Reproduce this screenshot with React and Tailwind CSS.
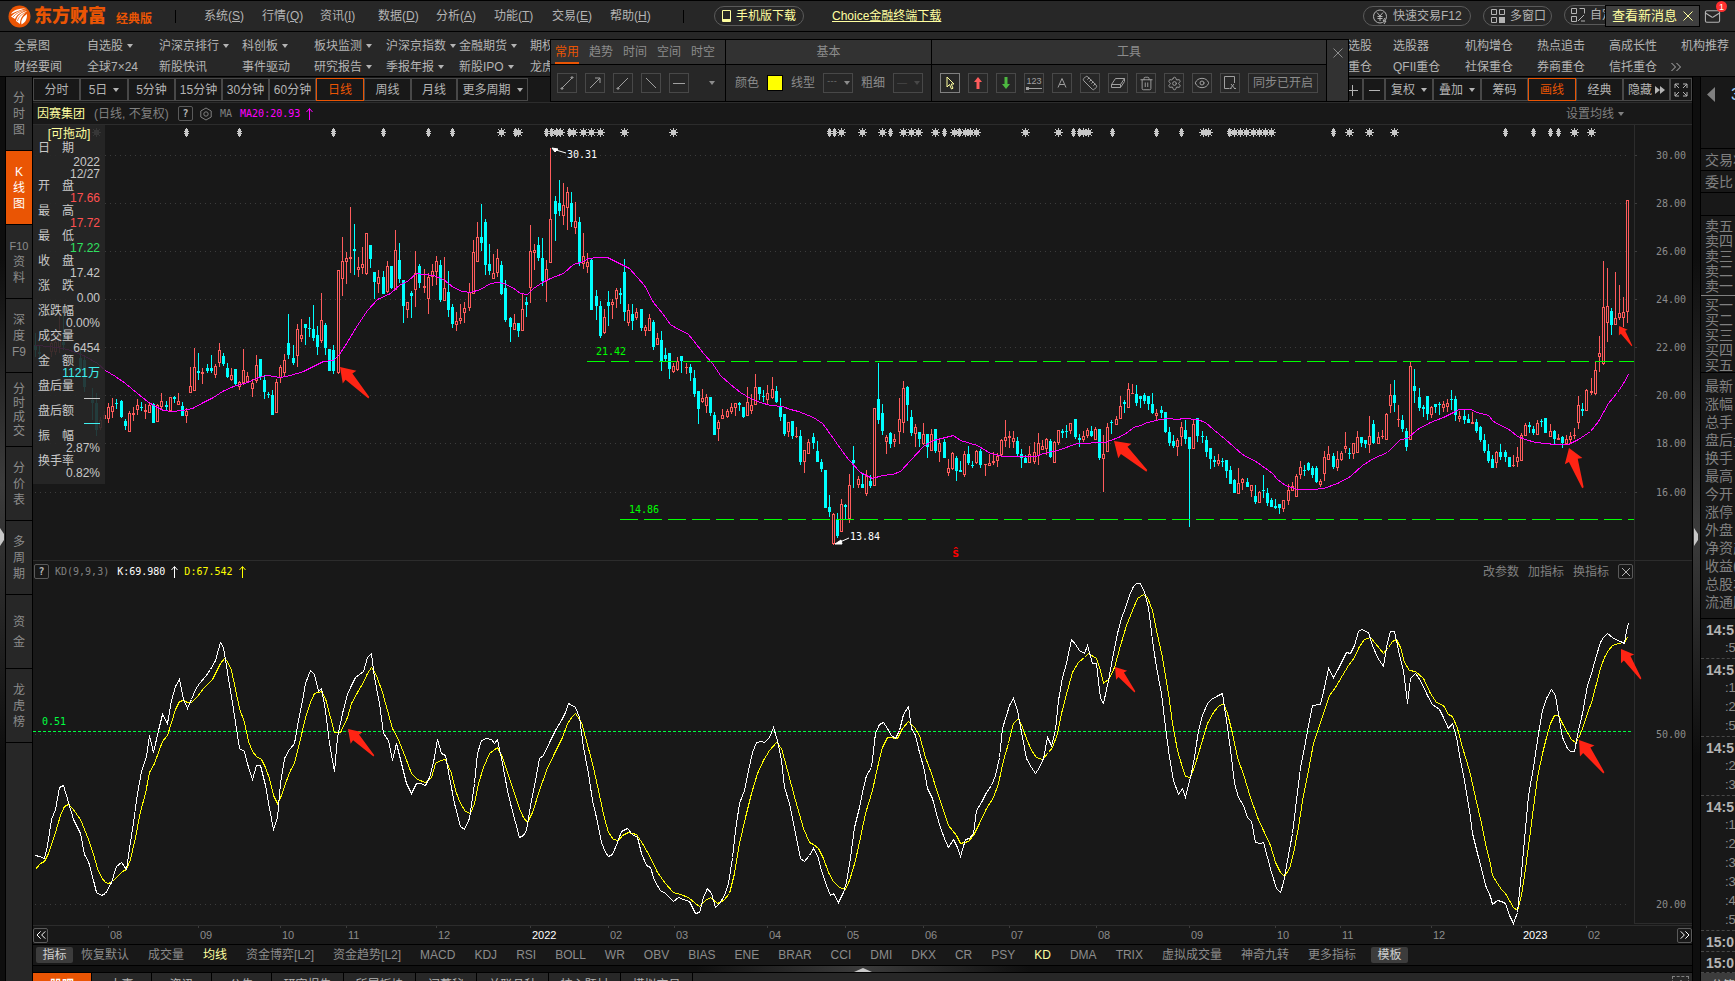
import React from "react";
import { Eye, Settings, Trash2, Mail, ChevronsLeft, ChevronsRight, Ruler } from "lucide-react";

/* ---------- chart data ---------- */
/* Each block: origin of the block and rows of [x, high, bodyTop, bodyBottom, low, rising], three units to a pixel. */
const CANDLES = [
  { ox: 0, oy: 80, rows: [[106,758,795,810,830,0],[118,797,817,822,843,0],[154,770,790,815,830,1],[166,760,785,815,825,1],[178,700,760,800,820,1],[190,705,785,795,810,0],[240,800,835,870,880,0],[253,830,840,920,935,0],[277,925,960,970,1020,0],[290,940,970,1050,1067,0],[302,1010,1020,1045,1050,1],[314,992,1006,1018,1018,1],[326,968,982,1018,1030,1],[337,955,978,997,1015,1],[350,957,968,972,988,0],[364,960,962,1012,1014,0],[376,1018,1022,1038,1050,0],[388,993,1000,1055,1055,1],[400,982,998,1006,1022,1],[412,957,976,990,1005,1],[424,965,980,984,992,0],[436,972,990,996,1018,1],[448,965,975,998,1000,1],[460,970,972,1030,1030,0],[472,973,975,1025,1025,1],[485,938,962,982,990,1],[499,962,975,982,992,0],[511,952,952,992,995,1],[523,947,950,958,970,0],[535,938,963,974,974,1],[548,965,977,1007,1008,0],[559,983,992,1007,1028,1],[571,860,918,938,938,1],[583,803,862,932,932,1],[595,820,873,880,900,0],[607,865,876,883,912,1],[622,852,865,872,880,0],[634,825,865,873,880,0],[646,852,858,885,893,1],[658,788,810,848,860,1],[670,820,827,852,858,0],[683,850,865,890,893,0],[695,865,884,900,902,1],[706,867,867,912,914,0],[718,902,906,920,930,1],[730,806,870,908,914,1],[742,877,888,905,910,1],[757,898,910,926,950,1],[769,825,856,902,908,1],[781,837,837,890,900,0],[794,885,900,936,957,0],[806,935,942,946,955,0],[817,930,945,1004,1005,0],[829,898,905,998,998,1],[841,855,862,895,910,1],[853,822,840,880,888,1],[865,702,790,825,838,0]] },
  { ox: 290, oy: 120, rows: [[10,675,713,730,735,0],[22,612,628,708,740,1],[34,597,645,656,665,1],[46,612,612,624,675,0],[58,590,623,627,650,0],[70,555,627,654,662,0],[82,618,645,682,704,0],[94,519,600,663,668,1],[106,610,615,684,705,0],[118,687,687,753,753,0],[130,675,690,753,762,0],[145,451,451,758,762,1],[157,351,423,476,528,1],[169,395,414,425,492,1],[181,261,411,417,459,1],[193,312,387,392,465,0],[205,411,441,449,471,1],[217,381,432,443,461,1],[229,339,340,461,465,1],[241,375,375,417,444,0],[253,456,456,486,536,0],[265,450,471,491,519,1],[280,453,471,521,522,0],[292,423,438,517,520,1],[304,437,438,504,508,0],[316,330,390,509,510,1],[328,369,420,477,490,0],[340,480,480,558,609,0],[352,546,546,570,594,1],[364,513,519,528,594,0],[376,393,458,509,560,1],[388,432,438,489,504,0],[403,447,498,504,518,1],[415,459,472,536,582,1],[427,432,453,472,498,1],[439,407,423,455,495,1],[451,420,434,540,546,0],[463,411,504,542,543,1],[475,453,516,570,591,0],[487,551,561,612,624,0],[499,576,602,614,632,1],[511,552,593,603,612,1],[523,546,564,580,609,1],[538,489,515,563,573,1],[550,360,396,521,522,1],[562,306,351,425,426,1],[574,252,351,369,393,0],[586,297,306,435,465,0],[598,372,432,453,465,0],[610,402,458,476,477,1],[622,387,414,458,471,1],[634,423,435,522,525,0],[646,480,504,600,606,0],[661,591,594,621,666,0],[673,582,609,629,630,1],[685,609,609,633,651,0],[697,519,568,632,633,1],[709,531,546,555,591,0],[721,315,393,503,549,1],[733,372,390,398,449,1],[745,351,375,414,423,0],[757,354,414,483,498,0],[769,420,447,482,546,1],[781,84,297,428,429,1],[796,228,243,282,363,0],[808,180,249,273,288,0],[820,189,255,287,315,1],[832,201,216,263,330,1],[844,216,249,306,321,0],[856,246,303,323,342,1],[868,291,306,429,438,0],[880,339,408,432,447,1],[892,399,426,440,459,1],[904,417,420,570,570,0],[919,510,528,558,600,0],[931,543,558,648,654,0],[943,567,591,638,642,1],[955,513,546,558,618,0],[967,537,546,554,597,1],[979,504,510,536,564,1],[991,504,518,524,552,0],[1003,417,456,576,603,0],[1015,552,570,608,618,1],[1027,552,582,603,630,0],[1039,564,577,593,600,1],[1054,567,567,624,633,0],[1066,615,621,632,648,1],[1078,582,594,632,633,1],[1090,600,606,681,690,0],[1102,639,653,674,675,1],[1114,633,660,723,753,0],[1126,684,705,717,724,0],[1138,699,699,747,777,0],[1150,729,738,755,759,1],[1162,711,724,750,753,1],[1174,708,708,724,759,0],[1189,728,741,744,762,1]] },
  { ox: 690, oy: 350, rows: [[1,42,51,69,93,0],[13,60,84,132,141,0],[25,123,123,177,222,0],[37,117,144,155,159,1],[49,132,141,167,189,1],[61,141,141,189,198,0],[73,186,195,255,255,0],[85,210,216,236,273,1],[97,177,196,206,207,1],[112,177,184,200,204,1],[124,159,172,185,192,1],[136,159,160,173,198,1],[148,156,159,164,183,0],[160,171,171,201,204,0],[172,111,157,197,198,1],[184,132,166,182,192,1],[196,72,111,164,165,1],[208,111,111,132,150,0],[220,120,137,141,156,0],[232,105,129,149,162,1],[247,81,117,143,146,1],[259,108,123,156,159,0],[271,144,171,201,213,0],[283,192,192,252,258,0],[295,216,217,246,261,1],[307,213,213,258,267,0],[319,231,258,262,264,1],[331,240,258,336,345,0],[343,300,300,335,369,1],[355,267,276,311,312,1],[370,249,261,279,297,0],[382,273,303,336,336,0],[394,327,336,357,366,0],[406,360,360,474,474,0],[418,435,471,486,501,0],[430,489,492,583,585,1],[442,489,507,558,564,0],[454,447,462,545,546,1],[466,462,465,471,507,0],[478,372,405,508,519,1],[490,288,330,339,414,0],[505,378,387,404,413,1],[517,372,402,414,414,0],[529,360,378,431,437,1],[541,375,393,408,414,0],[553,174,175,407,408,1],[565,39,147,210,222,0],[577,162,189,243,255,0],[589,255,262,275,312,1],[601,246,249,282,294,0],[613,252,267,276,291,1],[628,144,208,245,282,1],[640,93,115,218,249,1],[652,108,111,165,213,0],[664,180,201,249,258,0],[676,222,231,251,291,1],[688,246,246,267,291,0],[700,219,253,283,285,1],[712,252,252,291,324,0],[724,237,253,302,303,1],[736,237,237,303,309,0],[748,270,279,305,335,1],[763,267,276,324,324,0],[775,327,355,368,378,1],[787,306,310,356,360,1],[799,318,324,363,393,0],[811,333,361,366,366,0],[823,303,313,374,381,1],[835,288,312,339,345,0],[847,333,344,348,354,0],[859,300,303,340,341,1],[871,297,303,345,354,0],[886,342,342,345,378,1],[898,312,339,347,348,1],[910,306,333,338,345,1],[922,309,318,332,351,1],[934,267,270,314,321,1],[946,210,261,272,290,1],[958,243,258,263,294,1],[970,243,264,276,294,1],[982,261,273,312,318,0],[994,297,312,324,354,0],[1006,315,324,339,339,0],[1018,288,312,338,339,1],[1033,276,306,336,342,1],[1045,249,279,318,345,1],[1057,270,288,299,300,1],[1069,264,267,297,315,1],[1081,267,273,321,324,0],[1093,273,276,338,339,1],[1105,240,241,280,285,1],[1117,237,243,248,264,0],[1129,225,242,246,264,0],[1141,219,220,242,252,1],[1156,207,207,261,267,0],[1168,252,264,269,291,0],[1180,243,258,269,276,1],[1192,234,240,258,264,1],[1204,228,243,258,261,0],[1216,231,237,269,270,1],[1228,237,237,324,330,0],[1240,255,312,328,426,1],[1252,219,231,305,306,1],[1264,210,215,220,252,0]] },
  { ox: 1110, oy: 350, rows: [[19,198,207,224,225,1],[31,138,168,206,207,1],[43,150,157,162,189,0],[55,99,117,173,174,1],[67,102,129,132,132,1],[79,105,132,159,168,0],[91,138,138,147,174,0],[103,129,135,153,162,0],[115,138,138,162,180,0],[127,129,162,189,192,0],[139,177,189,199,213,1],[154,168,180,189,204,0],[166,186,186,246,249,0],[178,231,246,279,288,0],[190,255,273,288,294,0],[202,264,270,290,318,1],[214,216,231,262,288,1],[226,210,240,267,282,0],[238,261,261,297,531,0],[250,210,222,296,297,1],[262,204,204,258,276,0],[277,243,258,262,279,0],[289,258,270,306,321,0],[301,294,294,327,357,0],[313,318,330,336,351,0],[325,312,330,342,348,1],[337,324,332,336,351,0],[349,330,330,363,384,0],[361,348,360,402,402,0],[373,387,390,429,429,0],[385,354,399,431,432,1],[397,384,387,398,420,1],[412,384,396,411,411,0],[424,405,405,422,441,1],[436,405,438,456,462,0],[448,423,426,458,459,1],[460,375,419,423,444,0],[472,414,429,459,468,0],[484,444,450,471,471,0],[496,447,468,474,477,0],[508,462,462,474,492,0],[520,450,450,476,486,1],[535,402,420,452,465,1],[547,396,408,422,423,1],[559,372,378,440,441,1],[571,333,351,374,387,1],[583,345,359,363,378,0],[595,336,339,360,363,0],[607,348,354,375,384,0],[619,348,354,396,399,0],[631,387,393,404,411,1],[643,303,321,371,393,1],[655,288,312,329,330,1],[670,309,318,351,357,0],[682,303,327,353,363,1],[694,303,309,329,333,1],[706,246,288,296,309,1],[718,294,309,313,327,0],[730,279,279,311,327,1],[742,243,261,308,309,1],[754,261,261,279,291,0],[766,270,270,282,294,0],[778,198,258,284,309,1],[790,210,222,279,282,0],[805,246,261,281,282,1],[817,240,258,261,267,1],[829,189,192,269,270,1],[841,102,135,167,189,1],[853,90,135,159,186,0],[865,165,207,210,231,1],[877,195,210,237,246,0],[889,234,243,291,303,0],[901,36,48,269,270,1],[913,57,108,123,159,0],[928,114,141,174,183,0],[940,165,171,177,201,0],[952,138,138,192,210,0],[964,168,171,194,204,1],[976,162,162,171,189,0],[988,156,162,166,195,0],[1000,153,162,173,186,1],[1012,147,159,170,186,1],[1024,120,147,150,180,0],[1036,138,147,195,213,0],[1048,183,198,206,216,1],[1063,180,198,210,222,0],[1075,192,207,219,219,0],[1087,186,216,221,222,1],[1099,207,216,243,249,0],[1111,228,231,270,276,0],[1123,252,270,303,309,0],[1135,282,303,333,339,0],[1147,315,327,354,354,0],[1159,303,306,338,354,1],[1171,282,306,321,330,0],[1186,300,306,321,336,0],[1198,321,321,351,351,0]] },
  { ox: 1435, oy: 80, rows: [[235,1125,1155,1158,1160,1],[247,1100,1131,1145,1160,1],[259,1060,1066,1142,1143,1],[271,1028,1035,1067,1068,1],[283,1025,1035,1040,1060,0],[295,1038,1047,1060,1066,0],[307,1020,1030,1064,1065,1],[319,1017,1022,1026,1040,0],[331,1014,1014,1058,1058,0],[346,1032,1053,1070,1071,1],[358,1050,1053,1077,1095,0],[370,1062,1074,1079,1080,1],[382,1068,1070,1090,1104,0],[394,1065,1078,1093,1096,1],[406,1056,1068,1080,1088,1],[418,1045,1064,1067,1076,1],[430,948,976,1028,1047,1],[442,968,988,992,1008,0],[454,927,930,992,993,1],[469,893,934,938,944,1],[481,846,871,943,945,1],[493,768,820,832,876,1],[505,543,682,853,855,1],[517,564,678,730,786,1],[529,684,693,735,765,0],[541,576,714,734,735,1],[553,615,699,713,720,1],[565,651,697,713,740,1],[577,360,361,697,728,1]] },
];

/* Line series: origin, units per pixel on each axis, then flat x,y pairs. */
const MA20 = [
  [0, 80, 3, 3, [105,795,150,797,200,808,250,825,290,850,316,870,345,888,375,910,410,938,440,962,465,978,490,990,515,994,545,990,575,984,610,966,640,950,665,933,700,918,740,905,775,892,800,886,840,890]],
  [290, 120, 3, 3, [0,766,40,752,100,722,130,719,148,702,175,660,200,615,230,570,260,538,300,518,330,492,350,484,378,458,400,462,430,466,460,476,490,500,515,512,540,516,570,508,600,490,620,487,640,488,665,502,690,518,710,523,730,505,755,487,780,473,820,458,850,433,880,424,895,415,925,412,950,412,975,424,1000,434,1018,444,1040,470,1062,496,1090,545,1115,580,1140,612,1165,628,1190,640,1210,660,1240,700,1265,730,1290,765]],
  [690, 350, 3, 3, [120,102,150,126,180,143,210,155,240,165,275,168,300,178,325,183,370,202,395,220,430,263,440,282,475,328,510,365,545,383,575,374,605,373,630,363,660,330,700,287,730,270,765,262,788,254,810,270,860,284,900,310,940,319,1035,319,1060,309,1100,301,1160,280,1245,276,1285,262,1310,245,1330,230]],
  [1110, 350, 3, 3, [90,224,110,215,150,207,170,204,200,207,220,203,260,206,285,215,310,238,345,266,395,312,440,336,485,370,500,388,525,405,560,417,605,418,640,413,680,400,720,378,755,345,790,325,830,306,870,268,890,264,920,238,960,216,1000,202,1035,183,1045,178,1080,178,1100,186,1135,195,1150,212,1200,241]],
  [1435, 80, 3, 3, [245,1068,270,1076,300,1086,360,1093,400,1093,430,1078,465,1052,490,1022,520,970,545,935,565,910,578,882]],
];

const K_LINE = [
  [0, 400, 3, 2.699, [105,1228,118,1230,131,1236,142,1200,154,1130,166,1105,178,1044,190,1038,204,1085,218,1130,240,1170,252,1225,265,1245,278,1295,289,1328,302,1337,315,1330,332,1300,348,1258,362,1248,377,1265,388,1210,398,1140,410,1060,424,1000,437,960,448,905,460,950,473,890,485,848,500,872,512,810,524,773,536,752,548,808,560,832,573,808,585,780,598,763,615,745,630,727,645,703,659,652,670,668,682,735,694,800,706,870,718,940,731,948,745,990,757,1023,769,985,781,984,794,1040,806,1100,818,1157,830,1125,840,1035,853,965,866,942]],
  [290, 570, 1.3067, 3, [0,535,5,520,10,450,16,390,20,340,26,300,31,312,36,362,41,355,46,420,51,520,57,602,62,500,68,430,74,372,80,345,85,320,95,302,100,260,106,250,110,320,116,400,122,490,128,510,133,570,138,520,145,580,152,640,158,670,164,640,170,638,176,646,182,620,187,575,192,508,197,548,202,555,208,620,214,700,222,768,228,776,234,745,240,640,245,550,250,510,256,505,262,508,267,520,271,508,277,580,283,660,289,710,294,755,299,802,305,795,309,780,315,690,320,630,325,565,331,555,340,510,347,475,354,450,359,425,363,400,372,410,377,440,383,530,389,610,394,690,400,740,406,815,411,845,416,857,421,852,427,815,432,782,441,775,447,792,453,800,459,850,465,885,470,890,476,930,484,960,490,970,496,985,501,992,507,980,513,986,522,992,529,1030,534,1025,540,980,545,955,550,970,555,1012,561,1000,567,975,572,940,577,860,582,780,587,700,593,660,598,600,604,545,609,515,615,514,620,515,626,500,631,472,636,510,641,570,646,650,652,700,657,760,662,820,667,865,672,872,678,855,684,835,689,855,694,900,700,945,705,975,710,968,716,997,722,965,727,935,732,860,737,770,743,710,748,665,753,615,759,590,764,490,769,462,775,455,780,475,785,495,790,503,796,480,801,432,807,408,812,475,817,495,822,545,828,600,833,655,839,685,845,740,850,770,855,805,860,832,866,808,871,830,876,857,882,808,887,805,892,790,897,720,903,695,910,665,916,645,921,615,926,560,930,475,935,435,940,405,945,385,950,420,956,500,962,565,968,590,973,610,979,590,984,565,989,500,994,525,999,480,1004,390,1009,320,1014,280,1020,208,1026,222,1031,240,1037,248,1042,226,1048,278,1053,280,1058,385,1063,398,1069,330,1074,265,1080,190,1086,145,1091,110,1096,75,1101,48,1106,40,1111,40,1116,65,1121,110,1127,210,1132,290,1138,370,1143,470,1149,560,1154,630,1160,672,1165,655,1170,682,1176,620,1181,560,1187,480,1192,435,1198,400,1204,388,1212,375,1218,370,1224,470,1229,560,1234,640,1239,682,1245,705,1251,740,1256,752,1261,815,1267,820,1272,816,1277,860,1282,905,1288,955,1293,967,1298,935,1303,870,1309,790,1314,690,1320,590,1325,530,1330,465,1335,405,1346,403,1351,350,1357,295,1363,322,1369,295,1374,270,1380,246,1385,250,1390,225,1395,182,1400,177,1409,185,1414,225,1420,262,1428,287,1433,215,1438,184,1443,184,1448,240,1454,300,1459,398,1464,325,1470,310,1476,330,1486,375,1492,402,1501,418,1507,440,1513,475,1518,458,1523,500,1529,570,1534,630,1540,720,1545,790,1551,850,1557,905,1562,945,1568,978]],
  [1435, 540, 3, 3, [172,1092,186,1080,198,1083,210,1090,222,1125,235,1150,247,1115,258,995,270,865,280,765,295,680,308,580,320,510,334,475,347,446,360,465,370,520,382,590,395,625,405,633,418,633,430,570,442,520,456,435,468,400,482,345,494,305,505,290,517,280,530,290,545,300,555,302,566,310,572,270,578,250]],
];

const D_LINE = [
  [0, 400, 3, 2.699, [105,1265,120,1250,133,1245,145,1222,166,1165,180,1120,192,1095,204,1090,216,1100,240,1132,265,1185,278,1225,290,1262,302,1288,314,1302,325,1304,337,1298,350,1285,365,1272,377,1266,390,1240,405,1180,420,1110,434,1060,448,1005,462,980,473,950,485,920,500,903,512,870,524,835,536,812,548,810,560,816,573,816,590,800,610,778,635,752,659,710,671,696,682,705,694,730,706,780,718,830,731,870,745,920,757,948,769,962,782,970,794,990,806,1020,818,1065,830,1088,842,1065,854,1035]],
  [290, 570, 1.3067, 3, [0,600,5,580,10,530,16,480,20,440,26,395,31,370,41,362,46,385,52,440,58,487,65,487,74,440,80,400,88,365,95,335,100,310,106,292,112,315,120,365,127,420,133,475,140,500,150,560,158,610,166,628,176,636,184,622,190,580,196,570,203,566,210,610,216,660,222,700,229,722,235,728,240,700,246,640,252,590,260,550,271,530,277,560,284,605,290,650,299,715,305,740,310,755,316,725,325,660,335,600,345,550,355,500,362,460,368,438,373,430,380,455,386,500,394,580,402,660,410,745,416,785,422,808,428,810,434,796,442,786,452,792,460,820,470,860,480,905,490,940,500,965,510,972,520,980,529,1000,535,1008,542,990,549,982,558,998,566,990,573,970,580,910,587,820,595,740,602,670,610,610,618,570,626,540,635,515,641,535,650,600,660,690,670,775,678,815,684,822,690,835,696,865,703,905,710,932,717,952,725,958,730,930,738,870,745,800,752,730,760,660,767,590,774,530,780,502,793,504,800,475,807,454,815,470,822,495,830,560,838,610,845,665,852,710,860,765,870,795,876,818,886,814,893,795,900,760,910,715,918,680,925,640,932,570,938,520,945,460,951,445,956,470,962,505,968,540,975,560,982,567,990,545,996,530,1002,490,1008,430,1015,360,1022,305,1030,275,1037,262,1043,250,1053,265,1058,300,1063,338,1070,325,1077,290,1085,225,1093,165,1100,120,1107,85,1114,72,1120,82,1126,120,1132,180,1140,260,1147,370,1153,460,1159,540,1165,590,1170,618,1176,620,1182,580,1190,520,1198,460,1206,425,1213,408,1219,398,1225,430,1231,490,1238,560,1246,620,1255,680,1263,740,1272,780,1280,825,1287,875,1293,905,1299,918,1305,895,1311,850,1317,770,1323,690,1330,600,1337,520,1345,465,1351,420,1358,375,1366,350,1374,315,1382,285,1390,260,1397,228,1404,208,1411,200,1418,220,1428,250,1435,230,1440,212,1445,208,1451,230,1456,275,1462,300,1470,304,1480,325,1490,370,1498,395,1506,405,1513,432,1518,438,1525,475,1532,530,1540,600,1548,680,1556,760,1562,820,1568,880]],
  [1435, 540, 3, 3, [172,1005,185,1030,197,1048,210,1060,222,1080,235,1102,247,1110,258,1065,270,985,282,895,295,800,307,710,320,640,333,590,345,550,358,524,370,524,382,548,395,575,408,598,420,607,430,595,442,565,456,520,468,485,480,440,494,385,506,350,518,330,532,316,548,310,566,306,576,290]],
];

const NARROW_MARKS = [186, 239, 333, 383, 428, 452, 515, 546, 551, 569, 829, 834, 890, 944, 959, 1073, 1079, 1112, 1156, 1181, 1229, 1333, 1505, 1533, 1550, 1558];
const STAR_MARKS = [96, 501, 518, 556, 560, 573, 583, 591, 600, 624, 673, 841, 862, 882, 903, 911, 918, 935, 954, 965, 970, 976, 1025, 1058, 1083, 1088, 1203, 1208, 1234, 1240, 1246, 1253, 1259, 1265, 1271, 1349, 1369, 1394, 1574, 1591];

const toPath = (series) =>
  series
    .map(([ox, oy, sx, sy, p]) => {
      const out = [];
      for (let i = 0; i < p.length; i += 2) out.push(`${Math.round(ox + p[i] / sx)} ${Math.round(oy + p[i + 1] / sy)}`);
      return out.join(" ");
    })
    .join(" ");

function Line({ series, color }) {
  return <polyline points={toPath(series)} fill="none" stroke={color} strokeWidth="1" shapeRendering="crispEdges" transform="translate(.5 .5)" />;
}

function Candle({ ox, oy, row }) {
  const [px, h, t, b, l, up] = row;
  const x = ox + Math.floor(px / 3);
  const [H, T, B, L] = [h, t, b, l].map((v) => oy + Math.round(v / 3));
  const body = Math.max(B - T, 1);
  const color = up ? "#ff5c5c" : "#00ffff";
  return (
    <g fill={color} shapeRendering="crispEdges">
      <rect x={x} y={H} width="1" height={Math.max(T - H, 0)} />
      <rect x={x} y={T + body} width="1" height={Math.max(L - T - body, 0)} />
      <rect x={x - 1} y={T} width="3" height={body} />
      {up && body > 2 ? <rect x={x} y={T + 1} width="1" height={body - 2} fill="#181818" /> : null}
    </g>
  );
}

function Pointer({ tip, tail }) {
  const dx = tail[0] - tip[0];
  const dy = tail[1] - tip[1];
  const at = (a, p) => `${tip[0] + dx * a - dy * p},${tip[1] + dy * a + dx * p}`;
  return <polygon fill="#ff2414" points={[at(0, 0), at(0.33, -0.22), at(0.31, -0.11), at(0.99, -0.02), at(1, 0.02), at(0.31, 0.11), at(0.33, 0.22)].join(" ")} />;
}

function Dots({ y, to = 1630 }) {
  return <line x1="35" x2={to} y1={y + 0.5} y2={y + 0.5} stroke="#3c3c3c" strokeDasharray="1 4" shapeRendering="crispEdges" />;
}

function PriceChart() {
  const prices = [["30.00", 155], ["28.00", 203], ["26.00", 251], ["24.00", 299], ["22.00", 347], ["20.00", 395], ["18.00", 443], ["16.00", 492]];
  return (
    <svg role="img" aria-label="日K线" className="block h-[435px] w-full font-['DejaVu_Sans_Mono',monospace] text-[10px]" viewBox="33 125 1659 435" preserveAspectRatio="none">
      {prices.map(([p, y]) => (
        <g key={p}>
          <Dots y={y} />
          <rect x="1635" y={y} width="2" height="1" fill="#3c3c3c" />
          <text x="1656" y={y + 4} fill="#8c8c8c">{p}</text>
        </g>
      ))}
      <rect x="1634" y="125" width="1" height="435" fill="#2c2c2c" />
      <g fill="#c8c8c8" shapeRendering="crispEdges">
        {NARROW_MARKS.map((x) => (
          <path key={x} d={`M${x} 128h1v9h-1z M${x - 1} 129h3v7h-3z M${x - 2} 131h5v1h-5z M${x - 2} 133h5v1h-5z`} />
        ))}
        {STAR_MARKS.map((x) => (
          <path key={x} d={`M${x} 128h1v9h-1z M${x - 4} 132h9v1h-9z M${x - 2} 130h5v5h-5z M${x - 3} 129h1v1h-1z M${x + 3} 129h1v1h-1z M${x - 3} 135h1v1h-1z M${x + 3} 135h1v1h-1z`} />
        ))}
      </g>
      {CANDLES.map((b) => b.rows.map((r) => <Candle key={`${b.ox}-${r[0]}`} ox={b.ox} oy={b.oy} row={r} />))}
      <Line series={MA20} color="#ff00ff" />
      <g stroke="#00ff00" strokeDasharray="18 6" shapeRendering="crispEdges">
        <line x1="587" x2="1634" y1="361.5" y2="361.5" />
        <line x1="620" x2="1634" y1="519.5" y2="519.5" />
      </g>
      <g fill="#00ff00">
        <text x="596" y="355">21.42</text>
        <text x="629" y="513">14.86</text>
      </g>
      <g fill="#fff" stroke="#fff">
        <path d="M552 148l6 1-3 3z M556 150l10 3" />
        <path d="M835 544l6-4 1 4z M840 542l9-4" />
      </g>
      <g fill="#fff">
        <text x="567" y="158">30.31</text>
        <text x="850" y="540">13.84</text>
      </g>
      <text x="952" y="557" fill="#ff0000" className="text-[12px] font-bold">ŝ</text>
      <Pointer tip={[340, 367]} tail={[369, 398]} />
      <Pointer tip={[1114, 441]} tail={[1147, 471]} />
      <Pointer tip={[1569, 448]} tail={[1583, 488]} />
      <Pointer tip={[1619, 326]} tail={[1632, 346]} />
    </svg>
  );
}

function KdChart() {
  return (
    <svg role="img" aria-label="KD指标" className="block h-[343px] w-full shrink-0 font-['DejaVu_Sans_Mono',monospace] text-[10px]" viewBox="33 582 1659 343" preserveAspectRatio="none">
      <Dots y={734} />
      <Dots y={904} />
      <rect x="1634" y="582" width="1" height="341" fill="#2c2c2c" />
      <rect x="1634" y="923" width="58" height="1" fill="#2c2c2c" />
      <text x="1656" y="738" fill="#8c8c8c">50.00</text>
      <text x="1656" y="908" fill="#8c8c8c">20.00</text>
      <line x1="33" x2="1633" y1="731.5" y2="731.5" stroke="#00ff40" strokeDasharray="3 2" shapeRendering="crispEdges" />
      <text x="42" y="725" fill="#00ff40">0.51</text>
      <Line series={D_LINE} color="#ffff00" />
      <Line series={K_LINE} color="#ffffff" />
      <Pointer tip={[348, 729]} tail={[374, 756]} />
      <Pointer tip={[1115, 667]} tail={[1135, 692]} />
      <Pointer tip={[1579, 740]} tail={[1604, 773]} />
      <Pointer tip={[1621, 649]} tail={[1641, 679]} />
    </svg>
  );
}

/* ---------- small pieces ---------- */
const Caret = () => <svg className="h-[4px] w-[6px] shrink-0" viewBox="0 0 6 4" fill="currentColor"><path d="M0 0h6L3 4z" /></svg>;
const Sep = () => <span className="h-[13px] w-px bg-black" />;
const Cross = () => <svg className="h-[10px] w-[10px]" viewBox="0 0 10 10" fill="none" stroke="currentColor"><path d="M.5.500l9 9M9.500.500l-9 9" /></svg>;

function Logo() {
  return (
    <svg className="h-[23px] w-[23px]" viewBox="0 0 23 23">
      <circle cx="11.500" cy="11.500" r="11" fill="#ea5504" />
      <path fill="#fff" d="M3 9C5 5 10 3.500 18 3.500c-4 1-9 2.500-15 5.500zM3 11.500C7 7.500 12 5 18.500 4.500 15 7 9.500 8 7 14z M8 16c1-6 6-9 11-10-2 3-7 5-7 13z M13.500 19.500c-1-5 2-8 5.500-10.500 0 5-1 8-5.500 10.500z" />
      <path stroke="#ea5504" strokeWidth=".7" fill="none" d="M5 12C8 8 13 6 18 5M9.500 16c1-5 5-7 9-9" />
    </svg>
  );
}

function TitleBar() {
  const menus = ["系统(S)", "行情(Q)", "资讯(I)", "数据(D)", "分析(A)", "功能(T)", "交易(E)", "帮助(H)"];
  const pill = "flex h-[20px] items-center gap-[5px] rounded-full border border-[#5a5a5a] whitespace-nowrap";
  return (
    <header className="flex h-[32px] shrink-0 items-center border-y border-black bg-[#272727] pl-[8px]">
      <Logo />
      <span className="ml-[3px] w-[76px] text-[18px] leading-[24px] font-black whitespace-nowrap text-[#ea5504]">东方财富</span>
      <span className="ml-[6px] self-end pb-[4px] text-[12px] leading-[16px] font-bold text-[#ea5504]">经典版</span>
      <span className="ml-[23px] flex"><Sep /></span>
      <nav className="ml-[28px] flex">
        {menus.map((m) => (
          <button key={m} className="w-[58px] text-left">{m.slice(0, 3)}<u>{m[3]}</u>)</button>
        ))}
      </nav>
      <span className="ml-[15px] flex"><Sep /></span>
      <button className={`${pill} ml-[30px] w-[90px] justify-center text-[#ffffa0]`}>
        <svg className="h-[12px] w-[9px]" viewBox="0 0 9 12" fill="none" stroke="currentColor"><path d="M.5.500h8v11h-8z" /><path d="M0 10h9" strokeWidth="2" /></svg>
        手机版下载
      </button>
      <a href="#choice" className="ml-[28px] whitespace-nowrap text-[#ffffa0] underline">Choice金融终端下载</a>
      <div className="ml-auto flex items-center gap-[12px]">
        <button className={`${pill} w-[108px] pl-[9px]`}>
          <svg className="h-[15px] w-[15px]" viewBox="0 0 15 15" fill="none" stroke="currentColor"><circle cx="7" cy="7.500" r="6.500" /><path d="M4 3.500L7 7l3-3.500M7 7v5M4.500 7.500h5M4.500 9.500h5M12 9l-2 3h3l-2 3" /></svg>
          快速交易F12
        </button>
        <button className={`${pill} w-[69px] pl-[7px]`}>
          <svg className="h-[14px] w-[14px] shrink-0" viewBox="0 0 14 14" fill="none" stroke="currentColor"><path d="M.5.500h5v5h-5zM8.500.500h5v5h-5zM.5 8.500h5v5h-5z" /><path d="M8 8h6v6H8z" fill="currentColor" stroke="none" /></svg>
          多窗口
        </button>
        <div className="flex">
          <div className="w-[41px] overflow-hidden">
            <button className={`${pill} w-[80px] pl-[6px]`}>
              <svg className="h-[14px] w-[14px] shrink-0" viewBox="0 0 14 14" fill="none" stroke="currentColor"><path d="M.5.500h5v5h-5zM8.500.500h5v5M.5 8.500h5v5h-5zM7 13L13 7M10 13h4" /></svg>
              自定
            </button>
          </div>
          <div className="flex h-[22px] w-[95px] items-center justify-center gap-[6px] border border-black bg-[#3f3f3f] text-[13px] whitespace-nowrap text-[#ffffa0]">
            查看新消息
            <button aria-label="关闭消息"><Cross /></button>
          </div>
          <button aria-label="消息" className="relative mr-[14px] ml-[4px] flex items-center">
            <Mail size={17} strokeWidth={1.5} className="text-[#b4b4b4]" />
            <span className="absolute top-[-4px] right-[-6px] flex h-[11px] w-[11px] items-center justify-center rounded-full bg-[#ff3030] text-[9px] text-white">1</span>
          </button>
        </div>
      </div>
    </header>
  );
}

function QuickNav() {
  const left = ["全景图", "自选股▾", "沪深京排行▾", "科创板▾", "板块监测▾", "沪深京指数▾", "金融期货▾", "期权", "财经要闻", "全球7×24", "新股快讯", "事件驱动", "研究报告▾", "季报年报▾", "新股IPO▾", "龙虎榜"];
  const right = ["选股", "选股器", "机构增仓", "热点追击", "高成长性", "机构推荐", "重仓", "QFII重仓", "社保重仓", "券商重仓", "信托重仓"];
  return (
    <nav className="flex h-[45px] shrink-0 justify-between border-b border-black bg-[#272727] pt-[3px]">
      <div className="grid grid-cols-[73px_72px_83px_72px_72px_73px_71px_auto] grid-rows-[21px_21px] pl-[14px]">
        {left.map((t) => (
          <a key={t} href="#nav" className="flex items-center gap-[4px] whitespace-nowrap">
            {t.replace("▾", "")}
            {t.endsWith("▾") && <Caret />}
          </a>
        ))}
      </div>
      <div className="grid grid-cols-[45px_72px_72px_72px_72px_54px] grid-rows-[21px_21px]">
        {right.map((t) => (
          <a key={t} href="#nav" className="flex items-center whitespace-nowrap">{t}</a>
        ))}
        <button aria-label="更多" className="-ml-[10px] flex items-center">
          <svg className="h-[8px] w-[10px]" viewBox="0 0 10 8" fill="none" stroke="currentColor"><path d="M.5 0l4 4-4 4M5.500 0l4 4-4 4" /></svg>
        </button>
      </div>
    </nav>
  );
}

const toolBox = "flex h-[20px] w-[20px] items-center justify-center border border-[#484848] text-[#a0a0a0]";

function DrawIcon({ d }) {
  return <svg className="h-[18px] w-[18px]" viewBox="0 0 18 18" fill="none" stroke="currentColor"><path d={d} /></svg>;
}

function DrawingPanel() {
  const head = "flex h-[25px] items-center border-b border-black bg-[#323232]";
  const lines = [
    ["线段", "M4 14L14 4M3 14h2v1H3zM13 3h2v1h-2z"],
    ["箭头线", "M4 14L14 4M9 4h5v5"],
    ["射线", "M4 14L14 4M3 14h2v1H3z"],
    ["直线", "M4 4l10 10"],
    ["水平线", "M3 9.500h12"],
  ];
  return (
    <section aria-label="画线工具" className="absolute top-[39px] left-[550px] z-10 flex h-[63px] w-[799px] border border-black bg-[#272727] text-[#8c8c8c]">
      <div className="w-[175px] border-r border-black">
        <div className={`${head} gap-[10px] pl-[4px]`}>
          {["常用", "趋势", "时间", "空间", "时空"].map((t, i) => (
            <button key={t} className={i ? "h-full" : "h-full border-b-2 border-[#ea5504] pt-[2px] text-[#ea5504]"}>{t}</button>
          ))}
        </div>
        <div className="flex h-[36px] items-center gap-[8px] pl-[6px]">
          {lines.map(([n, d]) => <button key={n} aria-label={n} className={toolBox}><DrawIcon d={d} /></button>)}
          <button aria-label="更多线型" className="ml-[12px]"><Caret /></button>
        </div>
      </div>
      <div className="w-[206px] border-r border-black">
        <div className={`${head} justify-center`}>基本</div>
        <div className="flex h-[36px] items-center gap-[8px] pl-[9px]">
          <span>颜色</span>
          <input type="color" aria-label="颜色" defaultValue="#ffff00" className="h-[16px] w-[16px] appearance-none border border-black bg-[#ffff00] [&::-webkit-color-swatch]:border-0 [&::-webkit-color-swatch-wrapper]:p-0" />
          <label htmlFor="dash">线型</label>
          <span className="relative flex">
            <select id="dash" className="h-[20px] w-[30px] appearance-none border border-[#484848] bg-transparent pl-[3px] text-[10px]"><option>┄</option></select>
            <span className="pointer-events-none absolute top-[8px] right-[3px] flex"><Caret /></span>
          </span>
          <label htmlFor="weight" className="whitespace-nowrap">粗细</label>
          <span className="relative flex text-[#484848]">
            <select id="weight" className="h-[20px] w-[30px] appearance-none border border-[#484848] bg-transparent pl-[3px] text-[10px]"><option>—</option></select>
            <span className="pointer-events-none absolute top-[8px] right-[3px] flex"><Caret /></span>
          </span>
        </div>
      </div>
      <div className="flex-1 border-r border-black">
        <div className={`${head} justify-center`}>工具</div>
        <div className="flex h-[36px] items-center gap-[8px] pl-[8px]">
          <button aria-label="选择" className="flex h-[20px] w-[20px] items-center justify-center border border-[#808080] text-[#ffffa0]">
            <svg className="h-[14px] w-[9px]" viewBox="0 0 9 14" fill="none" stroke="currentColor"><path d="M1 1v10l2.500-2.500L5.500 13l1.500-.8L5.200 8H8z" /></svg>
          </button>
          <button aria-label="上箭头" className={toolBox}><svg className="h-[12px] w-[8px]" viewBox="0 0 8 12" fill="#ff5c5c"><path d="M4 0l4 5H5.500v7h-3V5H0z" /></svg></button>
          <button aria-label="下箭头" className={toolBox}><svg className="h-[12px] w-[8px]" viewBox="0 0 8 12" fill="#4db840"><path d="M4 12l4-5H5.500V0h-3v7H0z" /></svg></button>
          <button aria-label="序号" className={`${toolBox} flex-col text-[9px] leading-[9px]`}>
            123
            <svg className="h-[4px] w-[16px]" viewBox="0 0 16 4" fill="currentColor"><path d="M0 1h3v3H0zM3 2h13v1H3z" /></svg>
          </button>
          <button aria-label="文字" className={toolBox}><DrawIcon d="M5 13.500L9 4.500l4 9M6.500 10.500h5" /></button>
          <button aria-label="标尺" className={toolBox}><Ruler size={16} strokeWidth={1.5} /></button>
          <button aria-label="橡皮" className={toolBox}><DrawIcon d="M2.500 10.500l4-6h9l-4 6zM2.500 10.500v3h9l4-6v-3M11.500 10.500v3" /></button>
          <button aria-label="删除" className={toolBox}><Trash2 size={15} strokeWidth={1.5} /></button>
          <button aria-label="设置" className={toolBox}><Settings size={15} strokeWidth={1.5} /></button>
          <button aria-label="显示" className={toolBox}><Eye size={16} strokeWidth={1.5} /></button>
          <button aria-label="截图" className={toolBox}><DrawIcon d="M8 14.500H3.500v-12h10V9M9 15l4-5M14 15l-4-5M8.500 14.500h2M13 14.500h2" /></button>
          <button className="h-[20px] w-[70px] border border-[#484848] leading-[18px] whitespace-nowrap">同步已开启</button>
        </div>
      </div>
      <button aria-label="关闭" className="flex w-[21px] items-start justify-center bg-[#323232] pt-[8px]"><Cross /></button>
    </section>
  );
}

function PeriodBar() {
  const cell = "flex h-[23px] items-center justify-center gap-[6px] border border-[#484848] whitespace-nowrap";
  const hot = "flex h-[23px] items-center justify-center border border-[#ea5504] text-[#ea5504]";
  return (
    <div className="flex h-[26px] shrink-0 justify-between border-b border-[#2c2c2c] pt-[1px] text-[#b4b4b4]">
      <div className="grid grid-cols-[47px_48px_47px_47px_47px_47px_48px_47px_46px_71px]">
        {["分时", "5日▾", "5分钟", "15分钟", "30分钟", "60分钟", "日线", "周线", "月线", "更多周期▾"].map((t) => (
          <button key={t} className={t === "日线" ? hot : cell}>{t.replace("▾", "")}{t.endsWith("▾") && <Caret />}</button>
        ))}
      </div>
      <div className="grid grid-cols-[22px_22px_48px_48px_47px_48px_47px_47px_22px]">
        <button aria-label="放大" className={cell}><DrawIcon d="M4 9.500h11M9.500 4v11" /></button>
        <button aria-label="缩小" className={cell}><DrawIcon d="M4 9.500h11" /></button>
        <button className={cell}>复权<Caret /></button>
        <button className={cell}>叠加<Caret /></button>
        <button className={cell}>筹码</button>
        <button className={hot}>画线</button>
        <button className={cell}>经典</button>
        <button className="flex h-[23px] items-center justify-center gap-[3px] border border-[#484848] whitespace-nowrap">
          隐藏
          <svg className="h-[8px] w-[10px]" viewBox="0 0 10 8" fill="currentColor"><path d="M0 0l5 4-5 4zM5 0l5 4-5 4z" /></svg>
        </button>
        <button aria-label="全屏" className={cell}><DrawIcon d="M3 7V3h4M3 3l4 4M11 3h4v4M15 3l-4 4M3 11v4h4M3 15l4-4M15 11v4h-4M15 15l-4-4" /></button>
      </div>
    </div>
  );
}

const helpBox = "flex h-[15px] w-[15px] items-center justify-center rounded-[2px] border border-[#5a5a5a] text-[10px] leading-[10px] font-bold text-[#b4b4b4]";
const Up = () => <svg className="h-[12px] w-[7px]" viewBox="0 0 7 12" fill="none" stroke="currentColor"><path d="M3.500 12V1M.5 4l3-3.500 3 3.500" /></svg>;

function ChartHeader() {
  return (
    <div className="flex h-[22px] shrink-0 items-center border-b border-[#2c2c2c] pr-[68px] pl-[4px] font-['DejaVu_Sans_Mono','Noto_Sans_CJK_SC',monospace] text-[10px] text-[#808080]">
      <h1 className="text-[12px] font-normal text-[#ffffa0]">因赛集团</h1>
      <span className="ml-[9px] w-[78px] font-['Liberation_Sans','Noto_Sans_CJK_SC',sans-serif] text-[12px] whitespace-nowrap">(日线, 不复权)</span>
      <button aria-label="帮助" className={`${helpBox} ml-[6px]`}>?</button>
      <button aria-label="指标设置" className="ml-[6px]">
        <svg className="block h-[14px] w-[14px]" viewBox="0 0 14 14" fill="none" stroke="currentColor"><path d="M7 1l5.200 3v6L7 13l-5.200-3V4z" /><circle cx="7" cy="7" r="2.200" /></svg>
      </button>
      <span className="ml-[7px]">MA</span>
      <span className="ml-[8px] flex items-center gap-[6px] text-[#ff00ff]">MA20:20.93 <Up /></span>
      <button className="ml-auto flex items-center gap-[4px] font-['Liberation_Sans','Noto_Sans_CJK_SC',sans-serif] text-[12px]">设置均线<Caret /></button>
    </div>
  );
}

function QuotePopup() {
  const rows = [
    ["开　盘", "17.66", "text-[#ff5050]"], ["最　高", "17.72", "text-[#ff5050]"], ["最　低", "17.22", "text-[#30e060]"], ["收　盘", "17.42", ""],
    ["涨　跌", "0.00", ""], ["涨跌幅", "0.00%", ""], ["成交量", "6454", ""], ["金　额", "1121万", "text-[#40f0f0]"],
    ["盘后量", "—", ""], ["盘后额", "—", "text-[#40f0f0]"], ["振　幅", "2.87%", ""], ["换手率", "0.82%", ""],
  ];
  return (
    <aside className="absolute top-0 left-0 h-[359px] w-[72px] bg-[#272727]/90 px-[5px] pt-[3px] leading-[12px] text-[#c8c8c8]">
      <p className="h-[13px] text-center text-[#ffffa0]">[可拖动]</p>
      <p className="h-[14px] pt-[1px]">日　期</p>
      <p className="h-[25px] pt-[1px] text-right">2022<br />12/27</p>
      <dl>
        {rows.map(([k, v, c]) => (
          <div key={k} className="h-[25px]">
            <dt className="h-[12px]">{k}</dt>
            <dd className={`h-[13px] text-right ${c}`}>{v === "—" ? <span className="inline-block h-px w-[16px] bg-current align-middle" /> : v}</dd>
          </div>
        ))}
      </dl>
    </aside>
  );
}

function KdHeader() {
  return (
    <div className="flex h-[22px] shrink-0 items-center border-t border-[#2c2c2c] pl-[1px] font-['DejaVu_Sans_Mono',monospace] text-[10px] text-[#808080]">
      <button aria-label="帮助" className={helpBox}>?</button>
      <span className="ml-[6px]">KD(9,9,3)</span>
      <span className="ml-[8px] flex items-center gap-[6px] text-white">K:69.980 <Up /></span>
      <span className="ml-[6px] flex items-center gap-[6px] text-[#ffff00]">D:67.542 <Up /></span>
      <div className="ml-auto flex h-full items-center gap-[9px] border-r border-[#2c2c2c] pr-[1px] font-['Liberation_Sans','Noto_Sans_CJK_SC',sans-serif] text-[12px]">
        <button>改参数</button>
        <button>加指标</button>
        <button>换指标</button>
        <button aria-label="关闭指标" className={helpBox}><svg className="h-[8px] w-[8px]" viewBox="0 0 8 8" stroke="currentColor"><path d="M0 0l8 8M8 0L0 8" /></svg></button>
      </div>
      <span className="w-[57px]" />
    </div>
  );
}

function TimeAxis() {
  const ticks = [["08", 108], ["09", 198], ["10", 280], ["11", 346], ["12", 436], ["2022", 530], ["02", 608], ["03", 674], ["04", 767], ["05", 845], ["06", 923], ["07", 1009], ["08", 1096], ["09", 1189], ["10", 1275], ["11", 1340], ["12", 1431], ["2023", 1521], ["02", 1586]];
  return (
    <div className="flex h-[20px] shrink-0 items-center border-y border-t-[#2c2c2c] border-b-black">
      <button aria-label="向左" className="flex h-[15px] w-[15px] items-center justify-center rounded-[2px] border border-[#5a5a5a] text-white"><ChevronsLeft size={16} strokeWidth={1.5} className="shrink-0" /></button>
      <svg role="img" aria-label="月份" className="h-[18px] min-w-0 flex-1 text-[11px]" viewBox="48 926 1629 18" preserveAspectRatio="none">
        {ticks.map(([t, x]) => (
          <g key={x}>
            <rect x={x} y="926" width="1" height="2" fill="#3c3c3c" />
            <text x={x + 2} y="939" fill={t.length > 2 ? "#ffffff" : "#8c8c8c"}>{t}</text>
          </g>
        ))}
      </svg>
      <button aria-label="向右" className="flex h-[15px] w-[15px] items-center justify-center rounded-[2px] border border-[#5a5a5a] text-white"><ChevronsRight size={16} strokeWidth={1.5} className="shrink-0" /></button>
    </div>
  );
}

function IndicatorBar() {
  const items = ["恢复默认", "成交量", "均线", "资金博弈[L2]", "资金趋势[L2]", "MACD", "KDJ", "RSI", "BOLL", "WR", "OBV", "BIAS", "ENE", "BRAR", "CCI", "DMI", "DKX", "CR", "PSY", "KD", "DMA", "TRIX", "虚拟成交量", "神奇九转", "更多指标"];
  return (
    <div className="flex h-[21px] shrink-0 items-center gap-[19px] border-b border-black pl-[3px] whitespace-nowrap text-[#8c8c8c]">
      <button className="-mr-[11px] h-[16px] w-[37px] rounded-[2px] bg-[#3c3c3c] leading-[16px] text-[#d0d0d0]">指标</button>
      {items.map((t) => (
        <button key={t} className={t === "均线" || t === "KD" ? "text-[#ffffa0]" : ""}>{t}</button>
      ))}
      <button className="-ml-[4px] h-[16px] w-[37px] rounded-[2px] bg-[#3c3c3c] leading-[16px] text-[#d0d0d0]">模板</button>
    </div>
  );
}

function BottomTabs() {
  const tabs = ["股吧", "大事", "资讯", "公告", "研究报告", "所属板块", "问董秘", "关联品种", "核心题材", "模拟交易"];
  return (
    <>
      <div className="flex h-[6px] shrink-0 items-end justify-center bg-[linear-gradient(90deg,#101010_40%,#3c3c3c_50%,#101010_60%)] text-[#c8c8c8]">
        <svg className="h-[4px] w-[18px]" viewBox="0 0 18 4" fill="currentColor"><path d="M9 0l9 4H0z" /></svg>
      </div>
      <div className="grid h-[30px] shrink-0 grid-cols-[59px_60px_60px_60px_72px_72px_61px_72px_72px_72px_1fr] border-t border-black bg-[#272727]">
        {tabs.map((t, i) => (
          <button key={t} className={i ? "border-r border-black pb-[6px] text-[#b4b4b4]" : "border-r border-black bg-[#ea5504] pb-[6px] font-bold text-white"}>{t}</button>
        ))}
        <button aria-label="展开" className="mt-[3px] mr-[3px] flex h-[16px] w-[17px] justify-center justify-self-end border border-dashed border-[#808080] pt-[3px] text-[#b4b4b4]">
          <svg className="h-[5px] w-[8px]" viewBox="0 0 8 5" fill="currentColor"><path d="M4 0l4 4H0z" /></svg>
        </button>
      </div>
    </>
  );
}

function SideTabs() {
  const tabs = [["分", "时", "图"], ["K", "线", "图"], ["F10", "资", "料"], ["深", "度", "F9"], ["分", "时", "成", "交"], ["分", "价", "表"], ["多", "周", "期"], ["资", "金"], ["龙", "虎", "榜"]];
  return (
    <nav className="w-[26px] shrink-0 bg-[#272727] text-[#8c8c8c]">
      {tabs.map((t, i) => (
        <button
          key={t.join("")}
          className={i === 1 ? "flex h-[74px] w-full flex-col items-center justify-center border-b border-black bg-[#ea5504] leading-[16px] text-white" : t.length > 3 ? "flex h-[74px] w-full flex-col items-center justify-center border-b border-black leading-[14px]" : t.length < 3 ? "flex h-[74px] w-full flex-col items-center justify-center border-b border-black leading-[20px]" : "flex h-[74px] w-full flex-col items-center justify-center border-b border-black leading-[16px]"}
        >
          {t.map((c) => <span key={c} className={c === "F10" ? "text-[11px]" : ""}>{c}</span>)}
        </button>
      ))}
    </nav>
  );
}

function Trades() {
  const groups = [["14:5", ":5"], ["14:5", ":1", ":2", ":5"], ["14:5", ":2", ":3"], ["14:5", ":1", ":2", ":3", ":3", ":4", ":5"], ["15:0"], ["15:0"]];
  return groups.map((g, i) => (
    <ul key={i} className="border-b border-dashed border-[#484848]">
      {g.map((t, j) => (
        <li key={j} className={j ? "h-[19px] pl-[24px] text-[13px] leading-[17px] text-[#8c8c8c]" : "h-[20px] pl-[5px] text-[14px] leading-[22px] font-bold text-[#b4b4b4]"}>{t}</li>
      ))}
    </ul>
  ));
}

function RightPanel() {
  const row = "flex h-[22px] items-center border-b border-black pl-[4px]";
  return (
    <aside className="w-[34px] shrink-0 overflow-hidden text-[14px] whitespace-nowrap text-[#808080]">
      <div className="flex h-[72px] items-start justify-between border-b border-black pt-[10px] pl-[6px]">
        <button aria-label="上一只"><svg className="h-[15px] w-[8px]" viewBox="0 0 8 15" fill="currentColor"><path d="M8 0v15L0 7.500z" /></svg></button>
        <span className="w-[4px] text-[16px] leading-[16px] text-[#a0c8f0]">3</span>
      </div>
      <div className={row}>交易状态</div>
      <div className={row}>委比</div>
      <div className="h-[23px] border-b border-black" />
      <ul className="h-[80px] border-b border-[#808080] pt-[3px] pl-[4px] leading-[15px]">
        {["卖五", "卖四", "卖三", "卖二", "卖一"].map((t) => <li key={t}>{t}</li>)}
      </ul>
      <ul className="h-[77px] border-b border-black pt-[2px] pl-[4px] leading-[15px]">
        {["买一", "买二", "买三", "买四", "买五"].map((t) => <li key={t}>{t}</li>)}
      </ul>
      <ul className="h-[246px] border-b border-black pt-[4px] pl-[4px] leading-[18px]">
        {["最新", "涨幅", "总手", "盘后量", "换手", "最高", "今开", "涨停", "外盘", "净资产", "收益(三)", "总股本", "流通股"].map((t) => <li key={t}>{t}</li>)}
      </ul>
      <Trades />
      <button className="h-[24px] w-full bg-[#3c3c3c] pt-[2px] pl-[10px] text-left text-[12px] text-[#c8c8c8]">分笔</button>
    </aside>
  );
}

export default function App() {
  return (
    <div className="relative flex h-screen flex-col overflow-hidden bg-[#181818] font-['Liberation_Sans','Noto_Sans_CJK_SC',sans-serif] text-[12px] leading-[16px] text-[#b4b4b4]">
      <TitleBar />
      <QuickNav />
      <DrawingPanel />
      <div className="flex min-h-0 flex-1">
        <button aria-label="展开左栏" className="flex w-[6px] shrink-0 items-center border-r border-black bg-[linear-gradient(#0e0e0e_20%,#3c3c3c_45%,#0e0e0e_75%)] pt-[16px] text-[#c8c8c8]">
          <svg className="h-[18px] w-[4px]" viewBox="0 0 4 18" fill="currentColor"><path d="M0 0l4 6v6l-4 6z" /></svg>
        </button>
        <SideTabs />
        <main className="flex min-w-0 flex-1 flex-col border-l border-black">
          <PeriodBar />
          <ChartHeader />
          <div className="relative shrink-0">
            <PriceChart />
            <QuotePopup />
          </div>
          <KdHeader />
          <KdChart />
          <TimeAxis />
          <IndicatorBar />
          <BottomTabs />
        </main>
        <button aria-label="收起右栏" className="flex w-[9px] shrink-0 items-center border-x border-black bg-[linear-gradient(#0e0e0e_20%,#3c3c3c_50%,#0e0e0e_75%)] pt-[16px] pl-px text-[#c8c8c8]">
          <svg className="h-[18px] w-[4px]" viewBox="0 0 4 18" fill="currentColor"><path d="M0 0l4 6v6l-4 6z" /></svg>
        </button>
        <RightPanel />
      </div>
    </div>
  );
}
